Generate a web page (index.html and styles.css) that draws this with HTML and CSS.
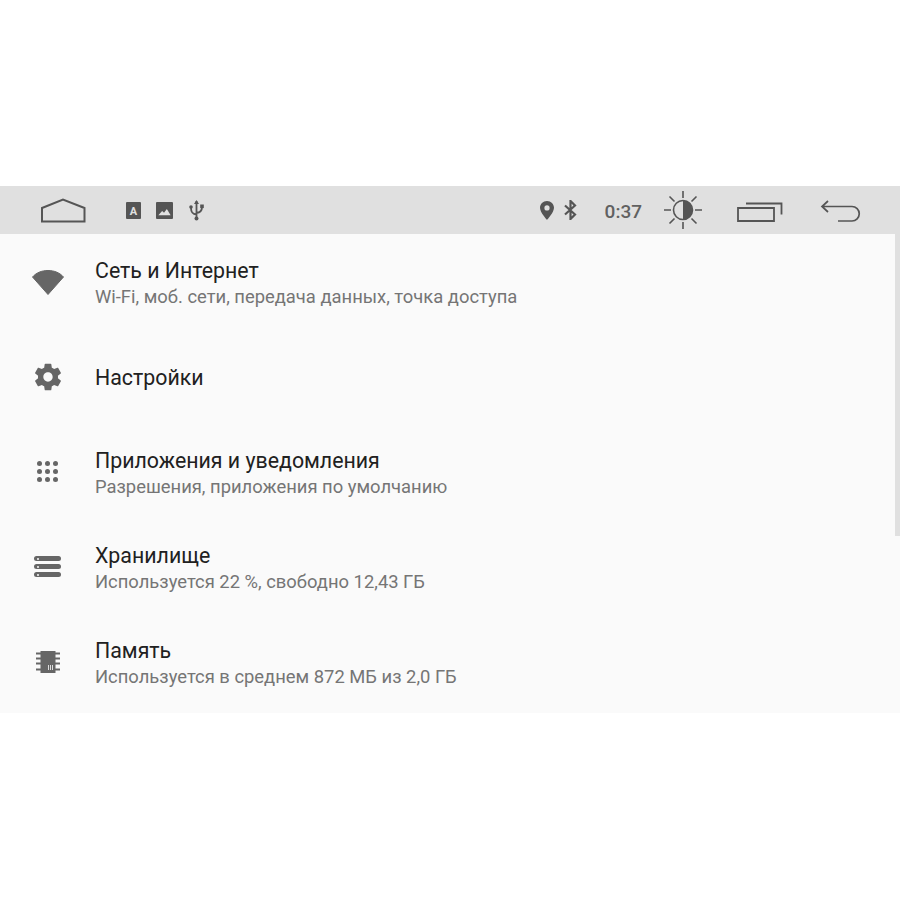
FILE: index.html
```html
<!DOCTYPE html>
<html lang="ru">
<head>
<meta charset="utf-8">
<title>Настройки</title>
<link rel="stylesheet" href="styles.css">
</head>
<body>
<div class="screen">
  <header class="bar">
    <svg class="home" width="46" height="26" viewBox="0 0 46 26"><path d="M1 10 L22 1.500 L43.500 10 V23.500 H1 Z" fill="none" stroke="#555" stroke-width="2"/></svg>
    <div class="notifs">
      <svg width="15" height="17" viewBox="0 0 15 17"><rect width="15" height="17" y="0" rx="1" fill="#555"/><text x="7.500" y="12.500" class="glyph-a">A</text></svg>
      <svg width="17" height="17" viewBox="0 0 18 18"><path d="M1 0H17a1 1 0 0 1 1 1V17a1 1 0 0 1-1 1H1a1 1 0 0 1-1-1V1a1 1 0 0 1 1-1Z M2.500 14H15.500L11.500 7.500L8.500 11.500L6.500 9.500Z" fill="#555" fill-rule="evenodd"/></svg>
      <svg width="15" height="21" viewBox="0 0 15 21"><path d="M7.500 1V20M7.500 14.500C3 14 2 12 2 8M7.500 13C12 12.500 13 10.500 13 7" fill="none" stroke="#555" stroke-width="1.800"/><path d="M7.500 0L10 4H5Z" fill="#555"/><circle cx="7.500" cy="18.500" r="2" fill="#555"/><circle cx="2" cy="7" r="1.800" fill="#555"/><rect x="11.200" y="4.500" width="3.600" height="3.600" fill="#555"/></svg>
    </div>
    <div class="status">
      <svg class="pin" width="14" height="19" viewBox="0 0 14 19"><path fill-rule="evenodd" d="M7 0C3 0 0 3 0 6.800C0 11.500 7 19 7 19S14 11.500 14 6.800C14 3 11 0 7 0ZM7 4.300A2.600 2.600 0 1 1 7 9.500A2.600 2.600 0 1 1 7 4.300Z" fill="#555"/></svg>
      <svg class="bt" width="13" height="20" viewBox="0 0 13 20"><path d="M1 5.500L11 14.500L6.500 19V1L11 5.500L1 14.500" fill="none" stroke="#555" stroke-width="2.200"/></svg>
      <span class="time">0:37</span>
      <svg class="sun" width="40" height="40" viewBox="0 0 40 40"><g stroke="#555" stroke-width="1.600"><path d="M20 1V8M20 32V39M1 20H8M32 20H39M6.500 6.500L11.500 11.500M28.500 28.500L33.500 33.500M33.500 6.500L28.500 11.500M11.500 28.500L6.500 33.500"/></g><circle cx="20" cy="20" r="9.500" fill="none" stroke="#555" stroke-width="1.600"/><path d="M20 10.500A9.500 9.500 0 0 1 20 29.500Z" fill="#555"/></svg>
      <svg class="recent" width="46" height="22" viewBox="0 0 46 22"><path d="M1 8H37V21H1ZM9 3.500 H44.500 V14.500" fill="none" stroke="#555" stroke-width="1.800"/></svg>
      <svg class="back" width="42" height="22" viewBox="0 0 42 22"><path d="M8 1L2 6.500L8 12M2 6.500H32A7 7 0 0 1 32 21H18" fill="none" stroke="#555" stroke-width="1.700"/></svg>
    </div>
  </header>
  <main class="list">
    <div class="scrollbar"></div>
    <div class="row">
      <div class="icon"><svg width="34" height="26" viewBox="0 0 34 26"><path d="M1.500 8C5.500 3.500 11 1.500 17 1.500S28.500 3.500 32.500 8L17 25.500Z" fill="#666" stroke="#666" stroke-linejoin="round"/></svg></div>
      <div class="text"><div class="title">Сеть и Интернет</div><div class="sub">Wi-Fi, моб. сети, передача данных, точка доступа</div></div>
    </div>
    <div class="row">
      <div class="icon"><svg width="32" height="32" viewBox="0 0 24 24"><path fill="#666" d="M19.430 12.980c.04-.32.07-.64.07-.98s-.03-.66-.07-.98l2.110-1.650c.19-.15.24-.42.12-.64l-2-3.460c-.12-.22-.39-.3-.61-.22l-2.490 1c-.52-.4-1.080-.73-1.690-.98l-.38-2.650C14.460 2.180 14.250 2 14 2h-4c-.25 0-.46.18-.49.42l-.38 2.650c-.61.25-1.170.59-1.690.98l-2.490-1c-.23-.09-.49 0-.61.22l-2 3.460c-.13.22-.07.49.12.64l2.110 1.650c-.04.32-.07.65-.07.98s.03.66.07.98l-2.110 1.650c-.19.15-.24.42-.12.64l2 3.460c.12.22.39.3.61.22l2.490-1c.52.4 1.080.73 1.690.98l.38 2.650c.03.24.24.42.49.42h4c.25 0 .46-.18.49-.42l.38-2.650c.61-.25 1.170-.59 1.690-.98l2.490 1c.23.09.49 0 .61-.22l2-3.460c.12-.22.07-.49-.12-.64l-2.110-1.650zM12 15.500c-1.930 0-3.500-1.570-3.500-3.500s1.570-3.500 3.500-3.500 3.500 1.570 3.500 3.500-1.570 3.500-3.500 3.500z"/></svg></div>
      <div class="text single"><div class="title">Настройки</div></div>
    </div>
    <div class="row">
      <div class="icon"><div class="dots"><i></i><i></i><i></i><i></i><i></i><i></i><i></i><i></i><i></i></div></div>
      <div class="text"><div class="title">Приложения и уведомления</div><div class="sub">Разрешения, приложения по умолчанию</div></div>
    </div>
    <div class="row">
      <div class="icon"><div class="stack"><i></i><i></i><i></i></div></div>
      <div class="text"><div class="title">Хранилище</div><div class="sub">Используется 22 %, свободно 12,43 ГБ</div></div>
    </div>
    <div class="row">
      <div class="icon"><svg width="24" height="24" viewBox="0 0 24 24"><rect x="4.500" y="1" width="15" height="22" fill="#666"/><path d="M0 3.500H24M0 8.500H24M0 13.500H24M0 19.500H24" stroke="#666" stroke-width="1.800"/><path d="M12.500 20V15M14.500 20V15M16.500 20V15" stroke="#ddd" stroke-width="1"/></svg></div>
      <div class="text"><div class="title">Память</div><div class="sub">Используется в среднем 872 МБ из 2,0 ГБ</div></div>
    </div>
  </main>
</div>
</body>
</html>
```
FILE: styles.css
```css
html, body { margin: 0; padding: 0; background: #fff; }
body { font-family: Roboto, "Liberation Sans", sans-serif; }
.screen { padding-top: 186px; width: 900px; height: 714px; }
.bar {
  height: 48px;
  background: #e0e0e0;
  display: flex;
  align-items: center;
  padding: 0 38px 0 41px;
}
.home { margin-top: 2px; }
.notifs { display: flex; align-items: center; gap: 15px; margin-left: 39px; }
.notifs svg:last-child { margin-left: 1px; }
.status { display: flex; align-items: center; margin-left: auto; }
.bt { margin-left: 10px; }
.time { margin-left: 28px; font-size: 19px; font-weight: 500; color: #616161; margin-top: 2px; }
.sun { margin-left: 21px; }
.recent { margin-left: 34px; margin-top: 2px; }
.back { margin-left: 37px; margin-top: 2px; }
.glyph-a { font: 700 11px Roboto, sans-serif; fill: #e0e0e0; text-anchor: middle; }
.list {
  position: relative;
  height: 479px;
  background: #fafafa;
}
.scrollbar {
  position: absolute;
  top: 0; right: 0;
  width: 5px;
  height: 302px;
  background: #e0e0e0;
}
.row { height: 95px; display: flex; align-items: center; }
.icon { width: 95px; display: flex; justify-content: center; align-items: center; flex: none; }
.text { display: flex; flex-direction: column; gap: 2px; padding-top: 4px; }
.text.single { padding-top: 1px; }
.title { font-size: 21.33px; line-height: 24px; padding-top: 1px; color: #212121; }
.sub { font-size: 18.4px; line-height: 24px; color: #757575; }
.dots { display: grid; grid-template-columns: repeat(3, 5.5px); gap: 2.5px; }
.dots i { width: 5.5px; height: 5.5px; border-radius: 50%; background: #666; }
.stack { display: flex; flex-direction: column; gap: 3px; }
.stack i { display: block; width: 27px; height: 5px; border-radius: 2.5px; background: #666; position: relative; }
.stack i::before { content: ""; position: absolute; left: 3px; top: 1.5px; width: 2px; height: 2px; border-radius: 50%; background: #fafafa; }
```
